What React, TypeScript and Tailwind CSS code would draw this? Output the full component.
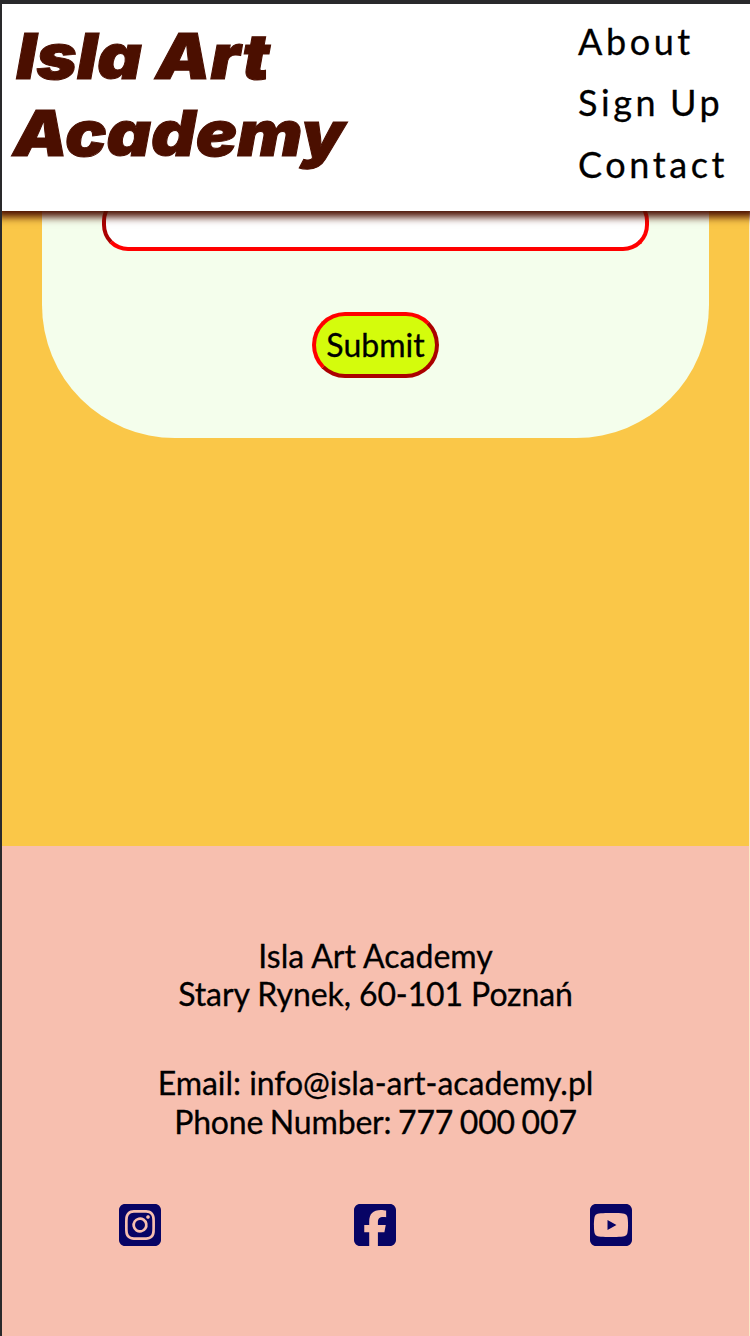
import { FaSquareInstagram, FaSquareFacebook, FaSquareYoutube } from "react-icons/fa6";

const links = ["About", "Sign Up", "Contact"];

export default function App() {
  return (
    <div className="h-[1336px] w-[750px] overflow-hidden bg-[#29292b] pt-1 pl-0.5 font-['Lato',sans-serif] text-black">
      <div className="flex h-[1332px] w-[748px] flex-col overflow-hidden bg-[#fbe9c8]">
        <header className="relative z-10 flex h-[206.5px] shrink-0 justify-between bg-white shadow-[0_0_8px_6px_#4b0f00]">
          <h1 className="ml-[11px] origin-left scale-x-[1.096] pt-[14px] font-['Inter',sans-serif] text-[63px] leading-[77px] font-black text-[#4b0f00] italic [-webkit-text-stroke:1px_#4b0f00] [font-feature-settings:'cv11']">
            <span className="block pl-[3px]">Isla Art</span>
            <span className="block">Academy</span>
          </h1>
          <nav className="flex w-[172px] flex-col pt-[7px] text-[36px] leading-[61.4px] tracking-[3.6px] whitespace-nowrap [-webkit-text-stroke:0.3px_#000] [word-spacing:-2px]">
            {links.map((link) => (
              <a key={link}>{link}</a>
            ))}
          </nav>
        </header>

        <main className="flex h-[635px] w-[747px] shrink-0 flex-col bg-[#fac748] px-10">
          <form className="flex h-[227px] w-[667px] flex-col items-center rounded-b-[133px] bg-[#f4feec]">
            <div className="flex h-[40.5px] w-[547px] shrink-0 flex-col justify-end overflow-hidden">
              <input className="h-[56px] w-full shrink-0 rounded-[26px] border-4 border-[red] bg-white [border-style:inset]" />
            </div>
            <button
              type="button"
              className="mt-[60.5px] h-[66px] w-[127px] rounded-[34px] border-4 border-[red] bg-[#d4fc0c] pt-px text-[32px] leading-[38px] [-webkit-text-stroke:0.3px_#000] [border-style:outset]"
            >
              Submit
            </button>
          </form>
        </main>

        <footer className="flex w-[747px] grow flex-col bg-[#f7bfaf] pt-[91px] text-center text-[32px] leading-[38.4px]">
          <div className="[-webkit-text-stroke:0.3px_#000]">
            <p>Isla Art Academy</p>
            <p className="tracking-[-0.1px]">Stary Rynek, 60-101 Poznań</p>
            <p className="mt-[51px] tracking-[-0.03px]">Email: info@isla-art-academy.pl</p>
            <p className="tracking-[-0.17px] [word-spacing:-1.4px]">Phone Number: 777 000 007</p>
          </div>
          <div className="mt-[60px] flex justify-between pr-[117px] pl-[116.5px] text-[#070465]">
            <FaSquareInstagram className="h-12 w-[42px]" />
            <FaSquareFacebook className="h-12 w-[42px]" />
            <FaSquareYoutube className="h-12 w-[42px]" />
          </div>
        </footer>
      </div>
    </div>
  );
}
